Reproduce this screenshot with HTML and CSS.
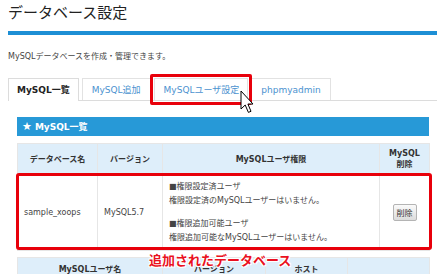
FILE: index.html
```html
<!DOCTYPE html>
<html lang="ja">
  <head>
    <meta charset="UTF-8" />
    <meta name="viewport" content="width=device-width, initial-scale=1.0" />
    <title>データベース設定</title>
    <link rel="stylesheet" href="styles.css">
  </head>
  <body>
    <h1>データベース設定</h1>
    <div class="rule"></div>
    <p class="lead">MySQLデータベースを作成・管理できます。</p>

    <!-- Tabs -->
    <ul class="tabs">
      <li class="tab active">MySQL一覧</li>
      <li class="tab">MySQL追加</li>
      <li class="tab marked">
        MySQLユーザ設定
        <span class="mark"></span>
        <svg class="cursor" width="14" height="24" viewBox="0 0 14 24">
          <path d="M1 1 L1 19 L5.2 15 L8.4 22.4 L11 21.3 L7.9 14 L13 14 Z" fill="#fff" stroke="#000" stroke-width="1" stroke-linejoin="round" />
        </svg>
      </li>
      <li class="tab">phpmyadmin</li>
    </ul>

    <!-- MySQL list -->
    <div class="section">
      <h2 class="section-title"><span class="star">★</span>MySQL一覧</h2>

      <table class="grid db-table">
        <colgroup>
          <col style="width: 80px" />
          <col style="width: 65px" />
          <col style="width: 217px" />
          <col style="width: 50px" />
        </colgroup>
        <tr>
          <th>データベース名</th>
          <th>バージョン</th>
          <th>MySQLユーザ権限</th>
          <th>MySQL<br />削除</th>
        </tr>
        <tr>
          <td>sample_xoops</td>
          <td>MySQL5.7</td>
          <td class="perm">
            <p>■権限設定済ユーザ<br />権限設定済のMySQLユーザーはいません。</p>
            <p class="gap">■権限追加可能ユーザ<br />権限追加可能なMySQLユーザーはいません。</p>
          </td>
          <td class="center"><button class="btn">削除</button></td>
        </tr>
      </table>

      <table class="grid user-table">
        <colgroup>
          <col style="width: 145px" />
          <col style="width: 103px" />
          <col style="width: 82px" />
          <col style="width: 82px" />
        </colgroup>
        <tr>
          <th>MySQLユーザ名</th>
          <th>バージョン</th>
          <th>ホスト</th>
          <th></th>
        </tr>
      </table>

      <!-- annotations -->
      <div class="row-mark"></div>
      <div class="note">追加されたデータベース</div>
    </div>
  </body>
</html>
```

FILE: styles.css
```css
body {
  margin: 0;
  padding: 2px 8px 0;
  font-family: "DejaVu Sans", "Noto Sans CJK JP", sans-serif;
  font-size: 8px;
  color: #444;
  background: #fff;
  overflow: hidden;
}
h1 {
  margin: 0;
  font-family: "Noto Sans CJK JP", sans-serif;
  font-size: 15px;
  font-weight: normal;
  line-height: 20px;
  color: #222;
}
.rule {
  margin-top: 9px;
  height: 4px;
  background: #1d8fd5;
}
.lead {
  margin: 16px 0 0;
  line-height: 12px;
}
.tabs {
  list-style: none;
  margin: 15px 0 0;
  padding: 0;
  display: flex;
  gap: 3px;
  border-bottom: 1px solid #dcdcdc;
}
.tab {
  height: 22px;
  line-height: 22px;
  padding: 0 9px;
  font-size: 9px;
  color: #4b92cf;
  border: 1px solid #e2e2e2;
  border-bottom: none;
  box-sizing: border-box;
  background: #fff;
}
.tab.active {
  color: #222;
  font-weight: bold;
  padding: 0 8px;
  height: 23px;
  margin-bottom: -1px;
  border-color: #dcdcdc;
}
.tab.marked {
  position: relative;
  padding: 0 8px 0 9px;
}
.mark {
  position: absolute;
  top: -5px;
  left: -5px;
  right: -5px;
  bottom: -5px;
  border: 3px solid #e8000b;
  border-radius: 2px;
}
.cursor {
  position: absolute;
  left: 85px;
  top: 11px;
}
.section {
  position: relative;
  margin: 16px 8px 0 9px;
}
.section-title {
  margin: 0;
  height: 19px;
  line-height: 19px;
  padding-left: 5px;
  background: #2799d7;
  color: #fff;
  font-size: 9px;
  font-weight: bold;
}
.star {
  font-size: 11px;
  margin-right: 3px;
}
.grid {
  width: 100%;
  table-layout: fixed;
  border-collapse: collapse;
}
.grid th,
.grid td {
  border: 1px solid #e6e6e6;
}
.grid th {
  background: #deeefa;
  color: #333;
  font-weight: bold;
  line-height: 11px;
  padding: 4px 2px;
  height: 31px;
  box-sizing: border-box;
}
.grid td {
  padding: 5px 6px;
  line-height: 14px;
}
.db-table {
  margin-top: 7px;
}
.user-table {
  margin-top: 6px;
}
.user-table th {
  vertical-align: top;
  padding-top: 6px;
}
.perm p {
  margin: 0;
}
.perm .gap {
  margin-top: 9px;
}
.center {
  text-align: center;
}
.btn {
  font-family: "Noto Sans CJK JP", sans-serif;
  font-size: 8px;
  height: 17px;
  padding: 0 3px;
  color: #333;
  border: 1px solid #b4b4b4;
  border-radius: 2px;
  background: linear-gradient(#fafafa, #dcdcdc);
}
.row-mark {
  position: absolute;
  top: 56px;
  left: -1px;
  width: 416px;
  height: 77px;
  box-sizing: border-box;
  border: 3px solid #e8000b;
  border-radius: 3px;
}
.note {
  position: absolute;
  left: 132px;
  top: 134px;
  font-family: "Noto Sans CJK JP", sans-serif;
  font-size: 13px;
  font-weight: bold;
  color: #ea1020;
  line-height: 18px;
  text-shadow: -1px -1px 0 #fff, 1px -1px 0 #fff, -1px 1px 0 #fff, 1px 1px 0 #fff, 0 0 2px #fff;
}
```
